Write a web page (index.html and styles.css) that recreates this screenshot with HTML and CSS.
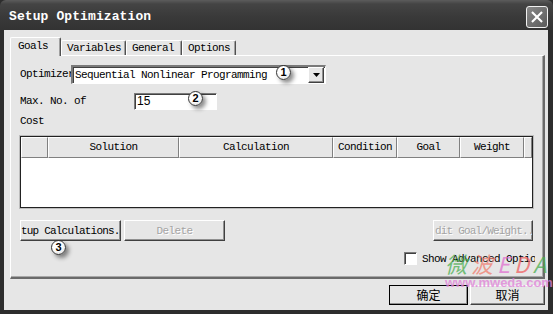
FILE: index.html
```html
<!DOCTYPE html>
<html lang="en">
<head>
    <meta charset="UTF-8">
    <title>Setup Optimization</title>
    <link rel="stylesheet" href="styles.css">
</head>
<body>
    <div class="window">
        <div class="titlebar">
            <span class="title">Setup Optimization</span>
            <div class="close">
                <svg width="21" height="21" viewBox="0 0 21 21">
                    <path d="M6 6 L15 15 M15 6 L6 15" stroke="#fff" stroke-width="2.2" stroke-linecap="square"/>
                </svg>
            </div>
        </div>

        <div class="frame">
            <div class="client">
                <!-- Tab strip -->
                <div class="tabs">
                    <div class="tab active">Goals</div>
                    <div class="tab">Variables</div>
                    <div class="tab">General</div>
                    <div class="tab">Options</div>
                </div>

                <div class="panel">
                    <div class="row opt-row">
                        <span class="label short">Optimizer</span>
                        <div class="combo">
                            <span class="combo-text">Sequential Nonlinear Programming</span>
                            <span class="drop">
                                <svg width="7" height="4" viewBox="0 0 7 4"><path d="M0 0 H7 L3.5 4 Z" fill="#000"/></svg>
                            </span>
                        </div>
                    </div>

                    <div class="row max-row">
                        <span class="label wide">Max. No. of</span>
                        <div class="edit">15</div>
                    </div>

                    <div class="cost">Cost</div>

                    <div class="grid">
                        <div class="grid-head">
                            <div class="hcell c0"></div>
                            <div class="hcell c1">Solution</div>
                            <div class="hcell c2">Calculation</div>
                            <div class="hcell c3">Condition</div>
                            <div class="hcell c4">Goal</div>
                            <div class="hcell c5">Weight</div>
                            <div class="hcell c6"></div>
                        </div>
                    </div>

                    <div class="btn-row">
                        <button class="btn calc">tup Calculations.</button>
                        <button class="btn disabled del">Delete</button>
                        <span class="spacer"></span>
                        <button class="btn disabled edit-goal">dit Goal/Weight..</button>
                    </div>

                    <div class="adv-row">
                        <span class="check"></span>
                        <span class="adv-text">Show Advanced Optio</span>
                    </div>

                    <!-- annotation markers -->
                    <span class="marker m1">1</span>
                    <span class="marker m2">2</span>
                    <span class="marker m3">3</span>
                </div>

                <div class="footer">
                    <button class="btn dlg default">确定</button>
                    <button class="btn dlg">取消</button>
                </div>

                <!-- watermark -->
                <div class="watermark">
                    <div class="wm-logo"><span class="g">微</span><span class="o">波</span><span class="p">E</span><span class="r">D</span><span class="g">A</span></div>
                    <div class="wm-url">www.mweda.com</div>
                </div>
            </div>
        </div>
    </div>
</body>
</html>
```

FILE: styles.css
```css
body {
    margin: 0;
    padding: 0;
    background: #2b2b2b;
}

.window {
    width: 553px;
    height: 314px;
    display: flex;
    flex-direction: column;
    background: #2d2d2d;
    font-family: "Liberation Mono", "DejaVu Sans Mono", monospace;
    font-size: 11px;
    letter-spacing: -0.6px;
    color: #000;
}

/* Title bar */
.titlebar {
    height: 30px;
    display: flex;
    align-items: center;
    padding: 0 5px 0 9px;
    background: linear-gradient(to bottom, #5c5c5c 0, #444 4px, #3a3a3a 16px, #333 30px);
    border-radius: 6px 6px 0 0;
}

.title {
    flex: 1;
    color: #fff;
    font-weight: bold;
    font-size: 13px;
    letter-spacing: 0.1px;
    padding-top: 3px;
}

.close {
    width: 20px;
    height: 20px;
    margin-top: 3px;
    border: 1px solid #f0f0f0;
    border-radius: 3px;
    background: linear-gradient(135deg, #888, #5a5a5a);
    display: flex;
    align-items: center;
    justify-content: center;
}

.close svg {
    width: 20px;
    height: 20px;
}

/* Window frame */
.frame {
    flex: 1;
    display: flex;
    padding: 0 5px 4px 4px;
}

.client {
    flex: 1;
    position: relative;
    background: #e6e6e6;
    padding: 7px 0 0 6px;
    display: flex;
    flex-direction: column;
}

/* Tabs */
.tabs {
    display: flex;
    align-items: flex-end;
    height: 18px;
}

.tab {
    height: 14px;
    line-height: 14px;
    padding: 0 4px 0 5px;
    border-top: 1px solid #fff;
    border-left: 1px solid #fff;
    border-right: 1px solid #505050;
    box-shadow: inset -1px 0 0 #a0a0a0;
    border-radius: 2px 2px 0 0;
}

.tab.active {
    height: 18px;
    line-height: 17px;
    width: 38px;
    padding: 0 4px 0 7px;
    margin-bottom: -1px;
    position: relative;
    z-index: 1;
    background: #e6e6e6;
}

.tab:nth-child(2) { width: 54px; }
.tab:nth-child(3) { width: 45px; }
.tab:nth-child(4) { width: 43px; }

/* Tab panel */
.panel {
    position: relative;
    height: 221px;
    width: 513px;
    border-top: 1px solid #fff;
    border-left: 1px solid #fff;
    border-right: 2px solid #6a6a6a;
    border-bottom: 2px solid #6a6a6a;
    box-shadow: inset -1px -1px 0 #a8a8a8;
    padding: 0 10px 0 9px;
}

.row {
    display: flex;
    align-items: center;
}

.opt-row {
    margin-top: 8px;
    height: 20px;
}

.label.short {
    width: 51px;
    overflow: hidden;
    white-space: nowrap;
}

.label.wide {
    width: 114px;
}

.combo {
    width: 252px;
    height: 16px;
    display: flex;
    align-items: center;
    background: #fff;
    border-top: 2px solid #7a7a7a;
    border-left: 2px solid #7a7a7a;
    border-right: 1px solid #fff;
    border-bottom: 1px solid #fff;
    box-shadow: inset 1px 1px 0 #404040;
}

.combo-text {
    flex: 1;
    padding-left: 2px;
}

.drop {
    width: 14px;
    height: 14px;
    margin-right: 1px;
    display: flex;
    align-items: center;
    justify-content: center;
    background: #e6e6e6;
    border-top: 1px solid #fff;
    border-left: 1px solid #fff;
    border-right: 1px solid #404040;
    border-bottom: 1px solid #404040;
    box-shadow: inset -1px -1px 0 #909090;
}

.max-row {
    margin-top: 8px;
    height: 18px;
}

.edit {
    width: 79px;
    height: 15px;
    line-height: 15px;
    padding-left: 2px;
    background: #fff;
    border-top: 1px solid #7a7a7a;
    border-left: 1px solid #7a7a7a;
    border-right: 1px solid #fff;
    border-bottom: 1px solid #fff;
    box-shadow: inset 1px 1px 0 #404040;
    font-family: "Liberation Sans", Arial, sans-serif;
    font-size: 12px;
    letter-spacing: 0;
}

.cost {
    margin-top: 5px;
    height: 12px;
    line-height: 12px;
}

/* Grid */
.grid {
    margin-top: 9px;
    width: 511px;
    height: 70px;
    background: #fff;
    border: 1px solid #222;
    box-shadow: 0 0 0 1px #bdbdbd;
}

.grid-head {
    display: flex;
    height: 21px;
}

.hcell {
    box-sizing: border-box;
    height: 21px;
    line-height: 19px;
    text-align: center;
    background: #e6e6e6;
    border-top: 1px solid #fff;
    border-left: 1px solid #fff;
    border-right: 1px solid #808080;
    border-bottom: 1px solid #808080;
}

.c0 { width: 27px; }
.c1 { width: 131px; }
.c2 { width: 154px; }
.c3 { width: 64px; }
.c4 { width: 63px; }
.c5 { width: 64px; }
.c6 { flex: 1; }

/* Buttons */
.btn-row {
    display: flex;
    margin-top: 12px;
    height: 21px;
}

.btn {
    box-sizing: border-box;
    height: 21px;
    padding: 0;
    font-family: inherit;
    font-size: inherit;
    letter-spacing: inherit;
    color: #000;
    background: #e6e6e6;
    border-top: 1px solid #fff;
    border-left: 1px solid #fff;
    border-right: 1px solid #404040;
    border-bottom: 1px solid #404040;
    box-shadow: inset -1px -1px 0 #909090;
    white-space: nowrap;
    overflow: hidden;
}

.btn.calc {
    width: 101px;
    text-align: left;
    letter-spacing: -0.8px;
}

.btn.del {
    width: 101px;
    margin-left: 3px;
}

.btn.edit-goal {
    width: 100px;
    text-align: left;
    padding-left: 1px;
    letter-spacing: -0.8px;
}

.btn.disabled {
    color: #a4a4a4;
    text-shadow: 1px 1px 0 #fff;
}

.spacer {
    flex: 1;
}

.adv-row {
    display: flex;
    align-items: center;
    margin-top: 11px;
    margin-left: 384px;
    width: 131px;
    overflow: hidden;
}

.check {
    width: 11px;
    height: 11px;
    background: #fff;
    border-top: 1px solid #7a7a7a;
    border-left: 1px solid #7a7a7a;
    border-right: 1px solid #fff;
    border-bottom: 1px solid #fff;
    box-shadow: inset 1px 1px 0 #404040;
    margin-right: 5px;
    flex: none;
}

.adv-text {
    white-space: nowrap;
}

/* Annotation markers */
.marker {
    position: absolute;
    width: 13px;
    height: 13px;
    border: 1px solid #333;
    border-radius: 50%;
    background: radial-gradient(circle at 40% 35%, #fff 40%, #d8d8d8 100%);
    font-family: "Liberation Sans", Arial, sans-serif;
    font-size: 11px;
    font-weight: bold;
    letter-spacing: 0;
    line-height: 13px;
    text-align: center;
    box-shadow: 3px 3px 4px rgba(0, 0, 0, 0.45);
}

.m1 { left: 265px; top: 9px; }
.m2 { left: 177px; top: 35px; }
.m3 { left: 40px; top: 184px; }

/* Footer buttons */
.footer {
    display: flex;
    justify-content: flex-end;
    padding: 6px 3px 0 0;
}

.btn.dlg {
    width: 75px;
    height: 20px;
    font-family: "Noto Sans CJK SC", sans-serif;
    font-size: 12px;
    letter-spacing: 0;
    line-height: 16px;
}

.btn.default {
    width: 79px;
    margin-right: 2px;
    outline: 1px solid #000;
    outline-offset: -1px;
    border-right-color: #000;
    border-bottom-color: #000;
}

/* Watermark */
.watermark {
    position: absolute;
    left: 441px;
    top: 219px;
    opacity: 0.75;
    pointer-events: none;
}

.wm-logo {
    font-family: "Noto Sans CJK SC", sans-serif;
    font-size: 22px;
    letter-spacing: 4px;
    line-height: 28px;
    font-style: italic;
}

.wm-logo .g { color: #4caf50; }
.wm-logo .o { color: #f08070; }
.wm-logo .p { color: #e070d0; }
.wm-logo .r { color: #f06060; }

.wm-url {
    font-family: "Liberation Sans", Arial, sans-serif;
    font-size: 13px;
    font-weight: bold;
    letter-spacing: 0;
    color: #e080d8;
    line-height: 12px;
}
```
